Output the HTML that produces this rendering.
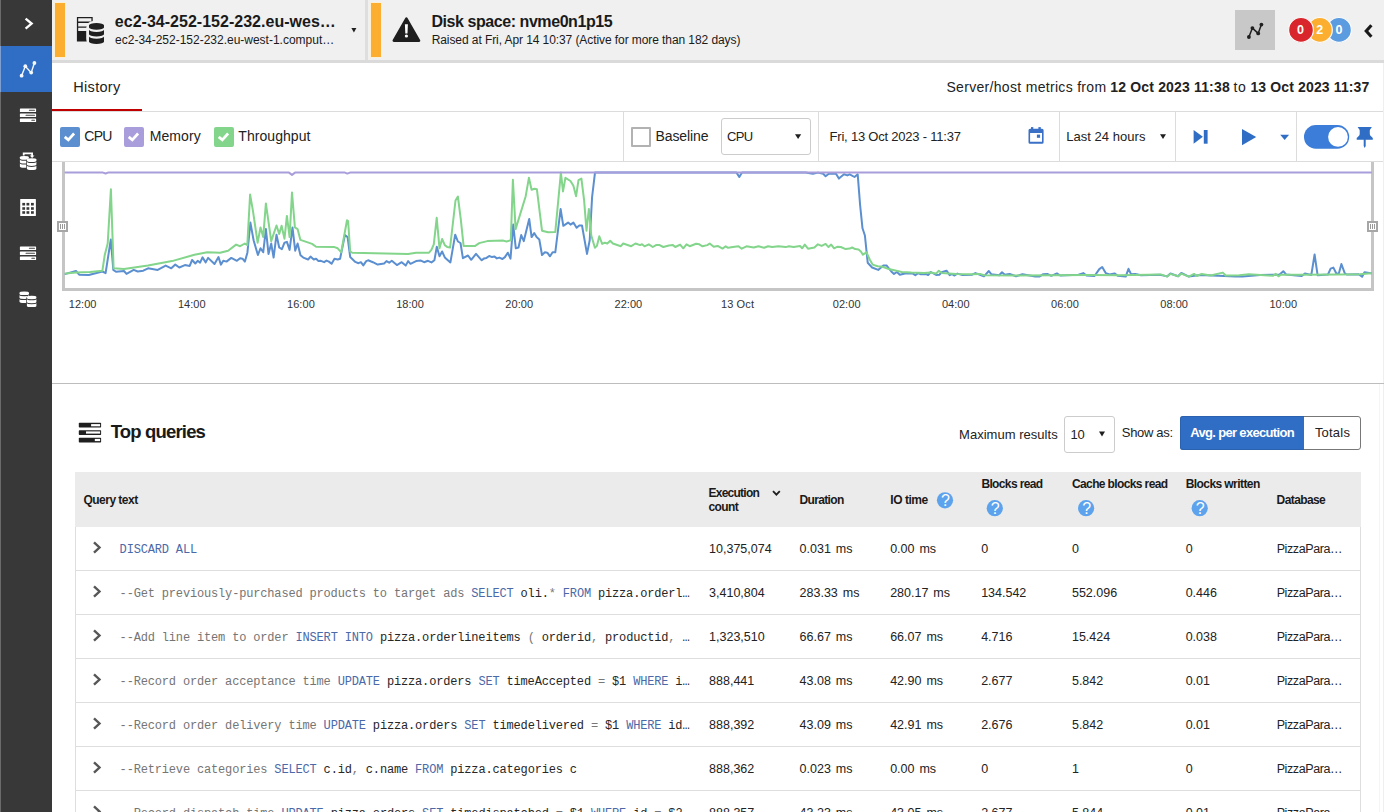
<!DOCTYPE html>
<html lang="en">
<head>
<meta charset="utf-8">
<title>Server overview</title>
<style>
*{box-sizing:border-box;margin:0;padding:0}
html,body{width:1384px;height:812px;overflow:hidden;background:#fff}
body{position:relative;font-family:"Liberation Sans",sans-serif;color:#222;font-size:13px}
.abs{position:absolute}
.t{position:absolute;white-space:nowrap;line-height:20px;height:20px}
.c{color:#757575}
.k{color:#4b69a8}
.o{color:#777}
#side{left:0;top:0;width:52px;height:812px;background:#383838;border-left:1px solid #6b6b6b}
#top{left:52px;top:0;width:1332px;height:60px;background:#f0f0f0}
#topb{left:52px;top:60px;width:1332px;height:3px;background:#dadada}
.obar{background:#fbae2f;width:10px;top:3px;height:54px;box-shadow:0 0 0 1px #fbf0d4}
.vsep{width:1px;background:#dcdcdc;top:112px;height:49px}
.cb{width:20px;height:20px;top:127px;border-radius:2px}
#thead{left:75px;top:472px;width:1286px;height:55px;background:#ebebeb}
.rl{left:75px;width:1286px;height:1px;background:#dedede}
</style>
</head>
<body>

<!-- ============ SIDEBAR ============ -->
<div id="side" class="abs"></div>
<svg class="abs" style="left:0;top:0" width="52" height="320" viewBox="0 0 52 320"><rect x="0" y="0" width="1" height="320" fill="#6b6b6b"/><rect x="1" y="46" width="51" height="46" fill="#2f6ec4"/><rect x="0" y="46" width="1" height="46" fill="#7f9fd0"/><polyline points="25.6,18.6 31.6,23.6 25.6,28.7" fill="none" stroke="#fff" stroke-width="2.4"/><g fill="#f4f7fc"><polyline fill="none" stroke="#f4f7fc" stroke-width="1.4" points="21.6,75.7 25.3,66.2 31.2,72.6 34.4,63"/><circle cx="21.6" cy="75.7" r="1.9"/><circle cx="25.3" cy="66.2" r="1.9"/><circle cx="31.2" cy="72.6" r="1.9"/><circle cx="34.4" cy="63" r="1.9"/></g><rect x="19.9" y="108.40" width="16.2" height="3.6" rx="0.6" fill="#fff"/><rect x="28.9" y="109.75" width="6.1" height="1" rx="0.5" fill="#444"/><rect x="19.9" y="113.45" width="16.2" height="3.6" rx="0.6" fill="#fff"/><rect x="25.5" y="114.80" width="9.5" height="1" rx="0.5" fill="#444"/><rect x="19.9" y="118.50" width="16.2" height="3.6" rx="0.6" fill="#fff"/><rect x="31.3" y="119.85" width="3.7" height="1" rx="0.5" fill="#444"/><g><path d="M19.90 157.30 A4.50 1.30 0 0 1 28.90 157.30 V158.50 A4.50 1.30 0 0 1 19.90 158.50Z" fill="#fff"/><path d="M19.90 159.50 A4.50 1.30 0 0 0 28.90 159.50 V162.30 A4.50 1.30 0 0 1 19.90 162.30Z" fill="#fff"/><path d="M19.90 163.30 A4.50 1.30 0 0 0 28.90 163.30 V166.40 A4.50 1.30 0 0 1 19.90 166.40Z" fill="#fff"/><rect x="26.2" y="158.6" width="10.9" height="12" rx="3" fill="#383838"/><path d="M26.90 159.50 A4.75 1.30 0 0 1 36.40 159.50 V160.70 A4.75 1.30 0 0 1 26.90 160.70Z" fill="#fff"/><path d="M26.90 161.70 A4.75 1.30 0 0 0 36.40 161.70 V164.60 A4.75 1.30 0 0 1 26.90 164.60Z" fill="#fff"/><path d="M26.90 165.60 A4.75 1.30 0 0 0 36.40 165.60 V168.80 A4.75 1.30 0 0 1 26.90 168.80Z" fill="#fff"/><path d="M23.7 155.6 V153.3 H32.1 V156" fill="none" stroke="#fff" stroke-width="1.8"/><path d="M29.7 155.5 h4.8 l-2.4 2.4z" fill="#fff"/></g><rect x="20.2" y="199" width="15.7" height="16.9" rx="0.5" fill="#fff"/><g fill="#383838"><rect x="22.3" y="202.9" width="2.8" height="2.6"/><rect x="26.5" y="202.9" width="2.8" height="2.6"/><rect x="31.0" y="202.9" width="2.8" height="2.6"/><rect x="22.3" y="207.2" width="2.8" height="2.6"/><rect x="26.5" y="207.2" width="2.8" height="2.6"/><rect x="31.0" y="207.2" width="2.8" height="2.6"/><rect x="22.3" y="211.2" width="2.8" height="2.6"/><rect x="26.5" y="211.2" width="2.8" height="2.6"/><rect x="31.0" y="211.2" width="2.8" height="2.6"/></g><rect x="19.9" y="246.40" width="16.2" height="3.6" rx="0.6" fill="#fff"/><rect x="28.9" y="247.75" width="6.1" height="1" rx="0.5" fill="#444"/><rect x="19.9" y="251.45" width="16.2" height="3.6" rx="0.6" fill="#fff"/><rect x="25.5" y="252.80" width="9.5" height="1" rx="0.5" fill="#444"/><rect x="19.9" y="256.50" width="16.2" height="3.6" rx="0.6" fill="#fff"/><rect x="31.3" y="257.85" width="3.7" height="1" rx="0.5" fill="#444"/><g><path d="M19.50 292.80 A4.75 1.20 0 0 1 29.00 292.80 V293.90 A4.75 1.20 0 0 1 19.50 293.90Z" fill="#fff"/><path d="M19.50 294.95 A4.75 1.20 0 0 0 29.00 294.95 V297.85 A4.75 1.20 0 0 1 19.50 297.85Z" fill="#fff"/><path d="M19.50 298.90 A4.75 1.20 0 0 0 29.00 298.90 V301.80 A4.75 1.20 0 0 1 19.50 301.80Z" fill="#fff"/><rect x="26.2" y="296" width="10.9" height="12" rx="3" fill="#383838"/><path d="M26.90 296.90 A4.75 1.20 0 0 1 36.40 296.90 V298.00 A4.75 1.20 0 0 1 26.90 298.00Z" fill="#fff"/><path d="M26.90 299.05 A4.75 1.20 0 0 0 36.40 299.05 V301.95 A4.75 1.20 0 0 1 26.90 301.95Z" fill="#fff"/><path d="M26.90 303.00 A4.75 1.20 0 0 0 36.40 303.00 V305.90 A4.75 1.20 0 0 1 26.90 305.90Z" fill="#fff"/></g></svg>
<!-- ============ TOP BAR ============ -->
<div id="top" class="abs"></div>
<div id="topb" class="abs"></div>
<div class="abs obar" style="left:55px"></div>
<div class="abs" style="left:365px;top:0;width:3px;height:60px;background:#dedede"></div>
<div class="abs obar" style="left:371px"></div>
<svg class="abs" style="left:52px;top:0" width="1332" height="63" viewBox="52 0 1332 63"><g fill="#1f1f1f"><path d="M76.9 16.9h15.8v24.6H76.9z M78.2 18.2v3.4h13.2v-3.4z M78.2 22.9v3.6h13.2v-3.6z M78.2 27.7v3.2h13.2v-3.2z" fill-rule="evenodd"/></g><rect x="86.2" y="21" width="20" height="25" rx="7" fill="#f0f0f0"/><path d="M89.00 25.20 A7.50 2.20 0 0 1 104.00 25.20 V27.50 A7.50 2.20 0 0 1 89.00 27.50Z" fill="#1f1f1f"/><path d="M89.00 29.80 A7.50 2.20 0 0 0 104.00 29.80 V34.20 A7.50 2.20 0 0 1 89.00 34.20Z" fill="#1f1f1f"/><path d="M89.00 36.50 A7.50 2.20 0 0 0 104.00 36.50 V41.70 A7.50 2.20 0 0 1 89.00 41.70Z" fill="#1f1f1f"/><path d="M406.4 18.7 L419 40.6 H393.8 Z" fill="#1f1f1f" stroke="#1f1f1f" stroke-width="2.6" stroke-linejoin="round"/><path d="M404.9 24.2h3l-0.4 9.2h-2.2z" fill="#fff"/><circle cx="406.4" cy="36" r="1.6" fill="#fff"/><path d="M351.4 28h5l-2.5 4.4z" fill="#1f1f1f"/><rect x="1235" y="10" width="40" height="40" fill="#c8c8c8"/><g fill="#1f1f1f"><polyline fill="none" stroke="#1f1f1f" stroke-width="1.5" points="1248.9,37 1252.4,28.1 1258.2,33.4 1261.4,24.6"/><circle cx="1248.9" cy="37" r="1.9"/><circle cx="1252.4" cy="28.1" r="1.9"/><circle cx="1258.2" cy="33.4" r="1.9"/><circle cx="1261.4" cy="24.6" r="1.9"/></g><circle cx="1339" cy="29.9" r="12.4" fill="#5b9be0" stroke="#fbfbfb" stroke-width="1.2"/><circle cx="1319.9" cy="29.9" r="12.4" fill="#fbae2f" stroke="#fbfbfb" stroke-width="1.2"/><circle cx="1301" cy="29.9" r="12.4" fill="#d9262c" stroke="#fbfbfb" stroke-width="1.2"/><polyline points="1371.4,25.2 1366.2,31 1371.4,36.8" fill="none" stroke="#1a1a1a" stroke-width="3.1"/></svg>
<!-- ============ TAB ROW ============ -->
<div class="abs" style="left:52px;top:111px;width:1332px;height:1px;background:#dcdcdc"></div>
<div class="abs" style="left:52px;top:109px;width:90px;height:2px;background:#c00000"></div>
<!-- ============ TOOLBAR ============ -->
<div class="abs cb" style="left:60px;background:#5b8fd0"></div>
<div class="abs cb" style="left:124px;background:#a99ddb"></div>
<div class="abs cb" style="left:214px;background:#82d58a"></div>
<div class="abs vsep" style="left:623px"></div>
<div class="abs cb" style="left:631px;background:#fff;border:2px solid #b2b2b2;width:20px;border-radius:1px"></div>
<div class="abs" style="left:721px;top:118px;width:90px;height:37px;border:1px solid #ccc;border-radius:3px;background:#fff"></div>
<div class="abs vsep" style="left:818px"></div>
<div class="abs vsep" style="left:1059px"></div>
<div class="abs vsep" style="left:1175px"></div>
<div class="abs vsep" style="left:1296px"></div>
<!-- ============ CHART ============ -->
<div class="abs" style="left:52px;top:161px;width:1332px;height:1px;background:#dcdcdc"></div>
<div class="abs" style="left:62px;top:162px;width:1312px;height:129px;border:3px solid #c5c5c5;border-top:none"></div>
<div class="abs" style="left:1383px;top:63px;width:1px;height:749px;background:#efefef"></div>
<div class="abs" style="left:1379px;top:384px;width:1px;height:428px;background:#f5f5f5"></div>
<!-- ============ DIVIDER ============ -->
<div class="abs" style="left:52px;top:383px;width:1332px;height:1px;background:#bdbdbd"></div>
<!-- ============ TOP QUERIES ============ -->
<div class="abs" style="left:1064px;top:416px;width:51px;height:37px;border:1px solid #ccc;border-radius:3px;background:#fff"></div>
<div class="abs" style="left:1180px;top:416px;width:181px;height:34px;border:1px solid #777;border-radius:3px;background:#fff"></div>
<div class="abs" style="left:1180px;top:416px;width:124px;height:34px;border-radius:3px 0 0 3px;background:#2f6ec4;border:1px solid #2b62b0;border-right:none"></div>
<div id="thead" class="abs"></div>
<div class="abs" style="left:75px;top:527px;width:1px;height:285px;background:#dedede"></div>
<div class="abs" style="left:1360px;top:527px;width:1px;height:285px;background:#dedede"></div>
<div class="abs rl" style="top:570px"></div>
<div class="abs rl" style="top:614px"></div>
<div class="abs rl" style="top:658px"></div>
<div class="abs rl" style="top:702px"></div>
<div class="abs rl" style="top:746px"></div>
<div class="abs rl" style="top:790px"></div>
<div class="abs rl" style="top:834px"></div>
<svg class="abs" style="left:52px;top:112px" width="1332" height="200" viewBox="52 112 1332 200"><g fill="none" stroke="#fff" stroke-width="2.7"><polyline points="64.7,136.9 68.3,139.9 74.1,133.5"/><polyline points="128.7,136.9 132.3,139.9 138.1,133.5"/><polyline points="218.7,136.9 222.3,139.9 228.1,133.5"/></g><path d="M795 134.2h6.2l-3.1 4.9z" fill="#1f1f1f"/><path d="M1160 134.2h6l-3 4.8z" fill="#1f1f1f"/><g fill="#3a70c6"><path d="M1028.5 130.2 a1.5 1.5 0 0 1 1.5-1.5 h12.1 a1.5 1.5 0 0 1 1.5 1.5 v12.1 a1.5 1.5 0 0 1-1.5 1.5 h-12.1 a1.5 1.5 0 0 1-1.5-1.5z M1030.1 133 v8.8 h11.9 v-8.8z" fill-rule="evenodd"/><rect x="1031" y="127.1" width="2.3" height="2.5"/><rect x="1038.4" y="127.1" width="2.4" height="2.5"/><rect x="1036.9" y="134.6" width="3.2" height="3.2"/></g><g fill="#2f6ec4"><path d="M1193.6 130 L1202.9 136.85 L1193.6 143.7z"/><rect x="1203.8" y="130" width="3.8" height="13.7"/><path d="M1242 129 L1256.2 137.1 L1242 145.2z"/><path d="M1280.2 134.8h8.9l-4.45 5.2z"/><path d="M1357.6 126.9 H1371.9 L1370.5 129 Q1369.8 129.5 1369.8 130.6 V134 Q1369.8 135.4 1371 136.3 L1372.8 137.9 V139.8 H1365.7 V146 L1364.7 148 L1363.7 146 V139.8 H1356.7 V137.9 L1358.5 136.3 Q1359.7 135.4 1359.7 134 V130.6 Q1359.7 129.5 1359 129 Z"/></g><rect x="1304" y="125" width="45.2" height="23.8" rx="11.9" fill="#3b7dd8"/><circle cx="1338" cy="136.9" r="9.9" fill="#fff"/><g fill="#a6a6a6"><rect x="57" y="221" width="11" height="11"/><rect x="1367" y="221" width="11" height="11"/></g><g fill="#fff"><rect x="59" y="223" width="7" height="7"/><rect x="1369" y="223" width="7" height="7"/></g><g fill="#999"><rect x="60" y="224" width="1" height="5"/><rect x="62" y="224" width="1" height="5"/><rect x="64" y="224" width="1" height="5"/><rect x="1370" y="224" width="1" height="5"/><rect x="1372" y="224" width="1" height="5"/><rect x="1374" y="224" width="1" height="5"/></g></svg>
<svg class="abs" style="left:52px;top:400px" width="1332" height="412" viewBox="52 400 1332 412"><rect x="78.8" y="422.8" width="22.3" height="4.7" rx="0.7" fill="#1f1f1f"/><rect x="91.1" y="424.1" width="9.0" height="2.2" fill="#fff"/><rect x="78.8" y="430.2" width="22.3" height="4.7" rx="0.7" fill="#1f1f1f"/><rect x="86.0" y="431.4" width="14.1" height="2.2" fill="#fff"/><rect x="78.8" y="437.7" width="22.3" height="4.7" rx="0.7" fill="#1f1f1f"/><rect x="94.8" y="438.9" width="5.3" height="2.2" fill="#fff"/><path d="M1099 431.6h6l-3 4.8z" fill="#1f1f1f"/><circle cx="945.0" cy="500.3" r="8.1" fill="#5ca2ec"/><circle cx="994.8" cy="508.2" r="8.1" fill="#5ca2ec"/><circle cx="1086.1" cy="508.2" r="8.1" fill="#5ca2ec"/><circle cx="1199.7" cy="508.2" r="8.1" fill="#5ca2ec"/><polyline points="773,491.1 776.4,494.7 779.8,491.1" fill="none" stroke="#1f1f1f" stroke-width="1.8"/><g fill="none" stroke="#575757" stroke-width="2.4"><polyline points="94,542.3 99.5,547.5 94,552.7"/><polyline points="94,586.3 99.5,591.5 94,596.7"/><polyline points="94,630.3 99.5,635.5 94,640.7"/><polyline points="94,674.3 99.5,679.5 94,684.7"/><polyline points="94,718.3 99.5,723.5 94,728.7"/><polyline points="94,762.3 99.5,767.5 94,772.7"/><polyline points="94,806.3 99.5,811.5 94,816.7"/></g></svg>
<svg class="abs" style="left:0;top:0" width="1384" height="300" viewBox="0 0 1384 300" fill="none" stroke-width="2" stroke-linejoin="round" stroke-linecap="round"><polyline stroke="#5b8fd0" points="65.6,273.9 76.0,271.0 79.2,274.7 88.8,275.0 102.4,271.5 105.6,273.1 110.8,239.5 113.3,269.9 116.0,271.8 124.0,271.0 126.5,273.9 133.7,269.9 137.7,271.5 143.3,270.7 148.1,268.3 157.7,269.9 165.7,265.6 171.3,268.3 175.3,264.6 179.3,267.5 184.9,265.1 189.7,265.9 192.1,260.0 195.3,263.5 197.7,260.8 200.1,262.7 202.5,257.4 205.7,262.4 208.1,257.9 214.5,264.0 218.5,257.1 220.9,264.6 223.3,260.8 226.5,261.6 231.3,257.9 236.9,260.8 240.1,258.2 242.5,258.7 244.9,261.6 247.4,252.7 250.4,222.6 253.6,240.3 257.9,255.0 260.5,248.3 263.2,252.3 265.9,229.1 268.5,253.9 271.2,243.5 273.6,257.6 276.5,234.7 279.2,247.5 281.9,249.1 284.5,242.7 286.9,241.9 289.6,249.9 292.5,227.4 295.2,250.7 297.6,243.5 300.5,255.2 303.3,257.6 308.1,259.5 310.5,256.6 313.7,259.5 316.1,258.7 318.5,261.1 320.9,260.8 324.1,262.2 326.5,260.6 328.9,261.6 331.6,263.8 334.5,258.7 337.7,259.5 340.1,258.7 344.9,235.0 347.6,237.1 350.2,257.1 355.3,261.9 358.5,263.2 360.9,262.2 363.3,265.4 366.2,261.1 368.1,260.3 372.9,262.2 377.7,264.6 384.1,263.5 386.5,261.1 389.2,262.7 391.8,260.8 396.9,265.1 401.7,262.2 405.7,265.6 408.1,261.1 410.5,263.8 416.1,261.1 420.9,260.6 424.1,262.2 428.0,260.8 431.5,262.4 434.4,260.3 436.8,246.7 439.5,256.3 442.1,251.5 444.8,257.4 450.4,262.4 455.2,234.7 457.9,241.5 460.5,243.0 462.9,258.2 468.0,255.5 471.2,259.8 476.0,253.9 481.7,260.3 484.1,258.4 486.5,257.9 489.2,256.0 492.1,257.1 494.5,256.6 496.9,258.4 499.3,257.6 502.5,259.0 504.9,257.1 507.8,252.7 510.5,258.7 513.2,224.6 515.8,248.3 518.5,247.5 521.2,235.1 523.8,241.1 529.2,219.0 531.6,237.1 534.2,233.1 536.6,237.1 539.3,239.5 542.0,255.0 544.9,252.3 547.3,252.7 550.0,256.3 552.6,252.3 555.3,252.3 560.6,209.0 563.3,225.8 568.1,222.6 570.5,224.6 573.4,222.6 576.6,227.8 579.3,225.5 582.0,225.5 587.0,253.9 589.7,240.3 592.1,197.0 595.0,172.6 736.5,172.6 739.3,177.0 742.0,172.6 805.6,172.6 812.8,173.8 818.0,172.6 823.2,173.8 825.6,176.2 828.8,173.8 836.0,173.8 838.9,178.6 844.0,174.3 847.3,175.4 849.7,174.3 854.5,177.0 857.7,174.3 860.1,205.0 862.5,228.3 864.9,235.5 867.7,262.7 872.1,267.5 878.2,269.9 883.3,265.6 886.5,265.4 891.3,271.5 894.0,273.9 896.9,272.0 899.8,274.7 904.9,273.6 912.9,273.6 915.3,275.2 918.0,273.1 920.9,274.2 925.7,273.9 928.1,275.0 930.8,272.0 936.1,275.0 939.3,274.7 941.7,272.3 946.5,270.7 949.7,275.2 952.1,274.2 954.5,275.5 957.4,273.6 962.5,275.0 972.2,274.7 975.4,273.1 980.0,274.7 984.0,276.3 988.8,271.0 991.2,274.2 999.2,275.2 1002.0,272.3 1004.8,274.7 1009.6,273.9 1016.0,276.3 1022.4,274.2 1035.3,276.6 1039.3,276.6 1043.3,274.2 1047.3,273.9 1051.3,275.8 1056.9,273.4 1060.1,275.5 1078.5,274.7 1083.3,273.1 1086.5,275.5 1094.5,276.0 1099.3,269.1 1102.2,267.0 1105.7,273.1 1109.7,274.4 1114.5,273.4 1117.7,275.8 1125.7,276.6 1128.5,268.8 1131.0,274.2 1135.3,273.9 1140.9,275.2 1160.0,274.7 1167.0,276.4 1170.4,273.5 1178.0,276.2 1181.3,273.0 1188.8,276.6 1200.0,275.0 1236.0,276.6 1242.5,276.6 1260.0,275.0 1279.3,274.7 1283.3,271.2 1286.0,274.4 1301.7,276.0 1304.9,273.6 1311.3,275.0 1314.6,254.5 1317.6,275.2 1328.0,274.5 1330.6,268.6 1333.4,267.6 1336.6,274.0 1338.9,273.3 1341.4,264.0 1344.8,273.3 1346.7,274.5 1358.6,274.3 1362.1,276.8 1364.5,272.3 1371.0,273.3"/><polyline stroke="#82d58a" points="65.6,273.6 76.0,272.6 90.0,272.0 102.4,270.7 104.8,254.7 107.7,243.5 110.9,189.3 113.6,268.3 124.0,269.1 148.0,265.6 172.0,261.1 194.5,254.7 207.3,252.3 220.1,252.7 228.1,250.7 236.1,244.6 240.1,246.2 244.9,243.5 247.3,245.1 250.1,194.6 252.8,209.8 257.6,242.7 260.5,227.4 263.2,237.1 265.9,203.4 271.2,241.1 276.5,225.5 279.2,233.9 281.6,225.8 284.5,238.7 286.9,215.9 289.6,237.1 292.0,192.5 294.9,227.4 297.6,229.1 300.4,239.9 304.1,241.1 312.1,243.9 316.1,246.7 334.5,247.1 337.7,248.3 341.2,252.3 347.0,220.2 348.1,221.0 350.2,251.5 352.1,252.7 408.1,253.9 416.1,252.7 429.0,252.7 431.4,249.9 433.8,244.3 436.7,217.8 439.5,248.3 442.1,239.0 444.8,245.1 447.2,247.0 450.1,247.5 455.5,200.5 457.9,196.5 460.8,219.4 463.6,245.9 475.2,245.9 479.2,243.1 487.3,241.1 503.3,240.6 506.5,241.5 510.8,240.3 512.9,179.7 515.6,229.1 525.7,196.2 528.9,177.8 531.6,189.8 534.5,188.7 536.9,189.3 542.0,230.7 548.1,232.3 555.3,231.9 560.9,172.6 563.0,191.4 565.4,177.8 570.5,181.0 573.4,185.8 576.1,196.2 578.5,180.2 581.4,178.6 584.1,200.2 586.5,230.7 588.9,209.0 591.3,235.5 594.9,247.8 596.9,245.9 599.3,236.3 602.2,243.9 604.9,242.7 607.3,243.5 610.2,240.7 612.9,243.5 620.8,246.2 623.2,243.5 631.2,246.2 635.5,243.5 640.0,245.1 642.0,244.3 644.5,246.3 648.8,244.3 652.8,247.0 656.0,245.1 659.6,245.1 663.3,247.0 668.9,245.5 672.9,245.1 675.3,247.0 680.1,244.6 683.3,248.3 686.5,244.3 689.7,246.2 696.1,243.8 699.3,244.3 702.5,246.3 707.3,245.1 709.7,243.5 713.7,246.7 717.7,245.9 722.5,248.6 725.7,246.3 728.1,247.8 732.9,247.0 738.5,246.2 741.7,248.7 746.5,246.3 753.7,247.5 758.5,246.2 764.1,247.8 768.1,246.2 772.1,247.0 778.5,246.2 785.7,247.1 788.9,246.2 793.6,247.0 800.0,245.9 802.1,248.3 804.8,244.6 808.0,248.7 814.4,247.5 817.9,244.3 821.6,245.9 825.6,243.9 828.5,247.1 831.2,244.6 834.1,248.3 837.6,246.7 840.8,247.0 845.6,249.1 849.7,248.6 852.1,247.5 855.3,249.1 858.5,249.4 860.9,251.5 862.9,254.7 866.5,252.3 869.7,259.5 872.6,264.6 877.7,266.2 882.5,266.7 888.9,269.1 895.3,270.4 901.7,272.0 911.3,272.6 924.1,273.1 930.5,272.6 936.1,273.6 938.8,270.7 941.7,273.1 956.1,273.9 972.2,274.2 980.0,273.9 984.0,275.2 1016.0,275.5 1056.0,275.2 1088.0,275.0 1120.0,275.2 1160.8,274.4 1167.2,276.6 1170.4,273.9 1178.4,276.3 1181.3,273.6 1188.8,276.6 1194.1,273.9 1196.8,276.0 1201.6,273.9 1210.5,275.5 1222.8,272.6 1225.7,275.5 1239.3,275.2 1248.9,274.2 1272.9,275.8 1275.8,273.9 1278.5,276.3 1280.9,274.7 1300.0,274.8 1340.0,274.6 1360.0,274.3 1371.0,273.3"/><polyline stroke="#a99ddb" points="65.5,172.6 103.0,172.6 105.6,173.5 108.0,172.6 289.0,172.6 292.0,174.9 295.0,172.6 345.0,172.6 347.3,173.6 350.0,172.6 1371.0,172.6"/></svg>
<!-- ============ TEXT ============ -->
<div class="t" style="left:114.84px;top:11.61px;font-size:16px;font-weight:bold;color:#1a1a1a;letter-spacing:0.017px;">ec2-34-252-152-232.eu-wes…</div>
<div class="t" style="left:115.08px;top:29.71px;font-size:12px;color:#1a1a1a;letter-spacing:-0.009px;">ec2-34-252-152-232.eu-west-1.comput…</div>
<div class="t" style="left:431.44px;top:11.61px;font-size:16px;font-weight:bold;color:#1a1a1a;letter-spacing:-0.437px;">Disk space: nvme0n1p15</div>
<div class="t" style="left:431.68px;top:29.71px;font-size:12px;color:#1a1a1a;letter-spacing:-0.082px;">Raised at Fri, Apr 14 10:37 (Active for more than 182 days)</div>
<div class="t" style="left:73.33px;top:76.70px;font-size:14.5px;letter-spacing:0.299px;">History</div>
<div class="t" style="left:946.46px;top:77.10px;font-size:14px;letter-spacing:0.312px;">Server/host metrics from</div>
<div class="t" style="left:1110.36px;top:77.10px;font-size:14px;font-weight:bold;letter-spacing:0.160px;">12 Oct 2023 11:38</div>
<div class="t" style="left:1233.46px;top:77.10px;font-size:14px;letter-spacing:0.696px;">to</div>
<div class="t" style="left:1250.46px;top:77.10px;font-size:14px;font-weight:bold;letter-spacing:0.130px;">13 Oct 2023 11:37</div>
<div class="t" style="left:84.36px;top:125.90px;font-size:14px;letter-spacing:-0.828px;">CPU</div>
<div class="t" style="left:149.76px;top:125.90px;font-size:14px;letter-spacing:0.086px;">Memory</div>
<div class="t" style="left:238.36px;top:125.90px;font-size:14px;letter-spacing:0.047px;">Throughput</div>
<div class="t" style="left:655.56px;top:125.90px;font-size:14px;letter-spacing:-0.103px;">Baseline</div>
<div class="t" style="left:727.02px;top:126.90px;font-size:13px;letter-spacing:-0.714px;">CPU</div>
<div class="t" style="left:829.62px;top:126.90px;font-size:13px;letter-spacing:-0.218px;">Fri, 13 Oct 2023 - 11:37</div>
<div class="t" style="left:1066.22px;top:126.90px;font-size:13px;letter-spacing:0.033px;">Last 24 hours</div>
<div class="t" style="left:68.74px;top:293.71px;font-size:11px;color:#333;letter-spacing:0.048px;">12:00</div>
<div class="t" style="left:177.89px;top:293.71px;font-size:11px;color:#333;letter-spacing:0.048px;">14:00</div>
<div class="t" style="left:287.04px;top:293.71px;font-size:11px;color:#333;letter-spacing:0.048px;">16:00</div>
<div class="t" style="left:396.19px;top:293.71px;font-size:11px;color:#333;letter-spacing:0.048px;">18:00</div>
<div class="t" style="left:505.34px;top:293.71px;font-size:11px;color:#333;letter-spacing:0.048px;">20:00</div>
<div class="t" style="left:614.49px;top:293.71px;font-size:11px;color:#333;letter-spacing:0.048px;">22:00</div>
<div class="t" style="left:720.89px;top:293.71px;font-size:11px;color:#333;letter-spacing:0.144px;">13 Oct</div>
<div class="t" style="left:832.79px;top:293.71px;font-size:11px;color:#333;letter-spacing:0.048px;">02:00</div>
<div class="t" style="left:941.94px;top:293.71px;font-size:11px;color:#333;letter-spacing:0.048px;">04:00</div>
<div class="t" style="left:1051.09px;top:293.71px;font-size:11px;color:#333;letter-spacing:0.048px;">06:00</div>
<div class="t" style="left:1160.24px;top:293.71px;font-size:11px;color:#333;letter-spacing:0.048px;">08:00</div>
<div class="t" style="left:1269.39px;top:293.71px;font-size:11px;color:#333;letter-spacing:0.048px;">10:00</div>
<div class="t" style="left:110.69px;top:422.21px;font-size:18.5px;font-weight:bold;color:#1a1a1a;letter-spacing:-0.826px;">Top queries</div>
<div class="t" style="left:959.02px;top:425.00px;font-size:13px;letter-spacing:0.031px;">Maximum results</div>
<div class="t" style="left:1070.62px;top:425.00px;font-size:13px;letter-spacing:-0.229px;">10</div>
<div class="t" style="left:1121.82px;top:422.60px;font-size:13px;letter-spacing:-0.322px;">Show as:</div>
<div class="t" style="left:1190.22px;top:422.60px;font-size:13px;font-weight:bold;color:#fff;letter-spacing:-0.668px;">Avg. per execution</div>
<div class="t" style="left:1314.92px;top:422.60px;font-size:13px;letter-spacing:0.207px;">Totals</div>
<div class="t" style="left:83.48px;top:490.01px;font-size:12px;font-weight:bold;color:#1a1a1a;letter-spacing:-0.522px;">Query text</div>
<div class="t" style="left:708.48px;top:483.10px;font-size:12px;font-weight:bold;color:#1a1a1a;letter-spacing:-0.747px;">Execution</div>
<div class="t" style="left:708.48px;top:496.60px;font-size:12px;font-weight:bold;color:#1a1a1a;letter-spacing:-0.626px;">count</div>
<div class="t" style="left:799.58px;top:490.01px;font-size:12px;font-weight:bold;color:#1a1a1a;letter-spacing:-0.663px;">Duration</div>
<div class="t" style="left:890.28px;top:490.01px;font-size:12px;font-weight:bold;color:#1a1a1a;letter-spacing:-0.464px;">IO time</div>
<div class="t" style="left:981.38px;top:474.32px;font-size:12px;font-weight:bold;color:#1a1a1a;letter-spacing:-0.628px;">Blocks read</div>
<div class="t" style="left:1071.98px;top:474.32px;font-size:12px;font-weight:bold;color:#1a1a1a;letter-spacing:-0.619px;">Cache blocks read</div>
<div class="t" style="left:1185.68px;top:474.32px;font-size:12px;font-weight:bold;color:#1a1a1a;letter-spacing:-0.571px;">Blocks written</div>
<div class="t" style="left:1276.58px;top:490.01px;font-size:12px;font-weight:bold;color:#1a1a1a;letter-spacing:-0.592px;">Database</div>
<div class="t" style="left:1297.05px;top:20.01px;font-size:12.5px;font-weight:bold;color:#fff;letter-spacing:0.022px;">0</div>
<div class="t" style="left:1316.15px;top:20.01px;font-size:12.5px;font-weight:bold;color:#fff;letter-spacing:0.022px;">2</div>
<div class="t" style="left:1335.45px;top:20.01px;font-size:12.5px;font-weight:bold;color:#fff;letter-spacing:-0.078px;">0</div>
<div class="t" style="left:941.04px;top:491.00px;font-size:16px;color:#fff;letter-spacing:-1.686px;">?</div>
<div class="t" style="left:990.84px;top:498.90px;font-size:16px;color:#fff;letter-spacing:-1.686px;">?</div>
<div class="t" style="left:1082.14px;top:498.90px;font-size:16px;color:#fff;letter-spacing:-1.686px;">?</div>
<div class="t" style="left:1195.74px;top:498.90px;font-size:16px;color:#fff;letter-spacing:-1.686px;">?</div>
<div class="t" style="left:119.60px;top:539.91px;font-size:12px;color:#262626;font-family:'Liberation Mono','DejaVu Sans Mono',monospace;letter-spacing:-0.167px;"><span class="k">DISCARD ALL</span></div>
<div class="t" style="left:709.05px;top:538.80px;font-size:12.5px;">10,375,074</div>
<div class="t" style="left:799.55px;top:538.80px;font-size:12.5px;word-spacing:1.5px;">0.031 ms</div>
<div class="t" style="left:890.15px;top:538.80px;font-size:12.5px;word-spacing:1.5px;">0.00 ms</div>
<div class="t" style="left:981.15px;top:538.80px;font-size:12.5px;">0</div>
<div class="t" style="left:1071.95px;top:538.80px;font-size:12.5px;">0</div>
<div class="t" style="left:1185.65px;top:538.80px;font-size:12.5px;">0</div>
<div class="t" style="left:1276.65px;top:538.80px;font-size:12.5px;letter-spacing:-0.401px;">PizzaPara…</div>
<div class="t" style="left:119.60px;top:583.91px;font-size:12px;color:#262626;font-family:'Liberation Mono','DejaVu Sans Mono',monospace;letter-spacing:-0.167px;"><span class="c">--Get previously-purchased products to target ads</span> <span class="k">SELECT</span> oli.<span class="o">*</span> <span class="k">FROM</span> pizza.orderl…</div>
<div class="t" style="left:709.05px;top:582.80px;font-size:12.5px;">3,410,804</div>
<div class="t" style="left:799.55px;top:582.80px;font-size:12.5px;word-spacing:1.5px;">283.33 ms</div>
<div class="t" style="left:890.15px;top:582.80px;font-size:12.5px;word-spacing:1.5px;">280.17 ms</div>
<div class="t" style="left:981.15px;top:582.80px;font-size:12.5px;">134.542</div>
<div class="t" style="left:1071.95px;top:582.80px;font-size:12.5px;">552.096</div>
<div class="t" style="left:1185.65px;top:582.80px;font-size:12.5px;">0.446</div>
<div class="t" style="left:1276.65px;top:582.80px;font-size:12.5px;letter-spacing:-0.401px;">PizzaPara…</div>
<div class="t" style="left:119.60px;top:627.91px;font-size:12px;color:#262626;font-family:'Liberation Mono','DejaVu Sans Mono',monospace;letter-spacing:-0.167px;"><span class="c">--Add line item to order</span> <span class="k">INSERT INTO</span> pizza.orderlineitems <span class="o">(</span> orderid<span class="o">,</span> productid<span class="o">,</span> …</div>
<div class="t" style="left:709.05px;top:626.80px;font-size:12.5px;">1,323,510</div>
<div class="t" style="left:799.55px;top:626.80px;font-size:12.5px;word-spacing:1.5px;">66.67 ms</div>
<div class="t" style="left:890.15px;top:626.80px;font-size:12.5px;word-spacing:1.5px;">66.07 ms</div>
<div class="t" style="left:981.15px;top:626.80px;font-size:12.5px;">4.716</div>
<div class="t" style="left:1071.95px;top:626.80px;font-size:12.5px;">15.424</div>
<div class="t" style="left:1185.65px;top:626.80px;font-size:12.5px;">0.038</div>
<div class="t" style="left:1276.65px;top:626.80px;font-size:12.5px;letter-spacing:-0.401px;">PizzaPara…</div>
<div class="t" style="left:119.60px;top:671.91px;font-size:12px;color:#262626;font-family:'Liberation Mono','DejaVu Sans Mono',monospace;letter-spacing:-0.167px;"><span class="c">--Record order acceptance time</span> <span class="k">UPDATE</span> pizza.orders <span class="k">SET</span> timeAccepted <span class="o">=</span> $1 <span class="k">WHERE</span> i…</div>
<div class="t" style="left:709.05px;top:670.80px;font-size:12.5px;">888,441</div>
<div class="t" style="left:799.55px;top:670.80px;font-size:12.5px;word-spacing:1.5px;">43.08 ms</div>
<div class="t" style="left:890.15px;top:670.80px;font-size:12.5px;word-spacing:1.5px;">42.90 ms</div>
<div class="t" style="left:981.15px;top:670.80px;font-size:12.5px;">2.677</div>
<div class="t" style="left:1071.95px;top:670.80px;font-size:12.5px;">5.842</div>
<div class="t" style="left:1185.65px;top:670.80px;font-size:12.5px;">0.01</div>
<div class="t" style="left:1276.65px;top:670.80px;font-size:12.5px;letter-spacing:-0.401px;">PizzaPara…</div>
<div class="t" style="left:119.60px;top:715.91px;font-size:12px;color:#262626;font-family:'Liberation Mono','DejaVu Sans Mono',monospace;letter-spacing:-0.167px;"><span class="c">--Record order delivery time</span> <span class="k">UPDATE</span> pizza.orders <span class="k">SET</span> timedelivered <span class="o">=</span> $1 <span class="k">WHERE</span> id…</div>
<div class="t" style="left:709.05px;top:714.80px;font-size:12.5px;">888,392</div>
<div class="t" style="left:799.55px;top:714.80px;font-size:12.5px;word-spacing:1.5px;">43.09 ms</div>
<div class="t" style="left:890.15px;top:714.80px;font-size:12.5px;word-spacing:1.5px;">42.91 ms</div>
<div class="t" style="left:981.15px;top:714.80px;font-size:12.5px;">2.676</div>
<div class="t" style="left:1071.95px;top:714.80px;font-size:12.5px;">5.842</div>
<div class="t" style="left:1185.65px;top:714.80px;font-size:12.5px;">0.01</div>
<div class="t" style="left:1276.65px;top:714.80px;font-size:12.5px;letter-spacing:-0.401px;">PizzaPara…</div>
<div class="t" style="left:119.60px;top:759.91px;font-size:12px;color:#262626;font-family:'Liberation Mono','DejaVu Sans Mono',monospace;letter-spacing:-0.167px;"><span class="c">--Retrieve categories</span> <span class="k">SELECT</span> c.id<span class="o">,</span> c.name <span class="k">FROM</span> pizza.categories c</div>
<div class="t" style="left:709.05px;top:758.80px;font-size:12.5px;">888,362</div>
<div class="t" style="left:799.55px;top:758.80px;font-size:12.5px;word-spacing:1.5px;">0.023 ms</div>
<div class="t" style="left:890.15px;top:758.80px;font-size:12.5px;word-spacing:1.5px;">0.00 ms</div>
<div class="t" style="left:981.15px;top:758.80px;font-size:12.5px;">0</div>
<div class="t" style="left:1071.95px;top:758.80px;font-size:12.5px;">1</div>
<div class="t" style="left:1185.65px;top:758.80px;font-size:12.5px;">0</div>
<div class="t" style="left:1276.65px;top:758.80px;font-size:12.5px;letter-spacing:-0.401px;">PizzaPara…</div>
<div class="t" style="left:119.60px;top:803.91px;font-size:12px;color:#262626;font-family:'Liberation Mono','DejaVu Sans Mono',monospace;letter-spacing:-0.167px;"><span class="c">--Record dispatch time</span> <span class="k">UPDATE</span> pizza.orders <span class="k">SET</span> timedispatched <span class="o">=</span> $1 <span class="k">WHERE</span> id <span class="o">=</span> $2</div>
<div class="t" style="left:709.05px;top:802.80px;font-size:12.5px;">888,357</div>
<div class="t" style="left:799.55px;top:802.80px;font-size:12.5px;word-spacing:1.5px;">43.23 ms</div>
<div class="t" style="left:890.15px;top:802.80px;font-size:12.5px;word-spacing:1.5px;">43.05 ms</div>
<div class="t" style="left:981.15px;top:802.80px;font-size:12.5px;">2.677</div>
<div class="t" style="left:1071.95px;top:802.80px;font-size:12.5px;">5.844</div>
<div class="t" style="left:1185.65px;top:802.80px;font-size:12.5px;">0.01</div>
<div class="t" style="left:1276.65px;top:802.80px;font-size:12.5px;letter-spacing:-0.401px;">PizzaPara…</div>
</body>
</html>
